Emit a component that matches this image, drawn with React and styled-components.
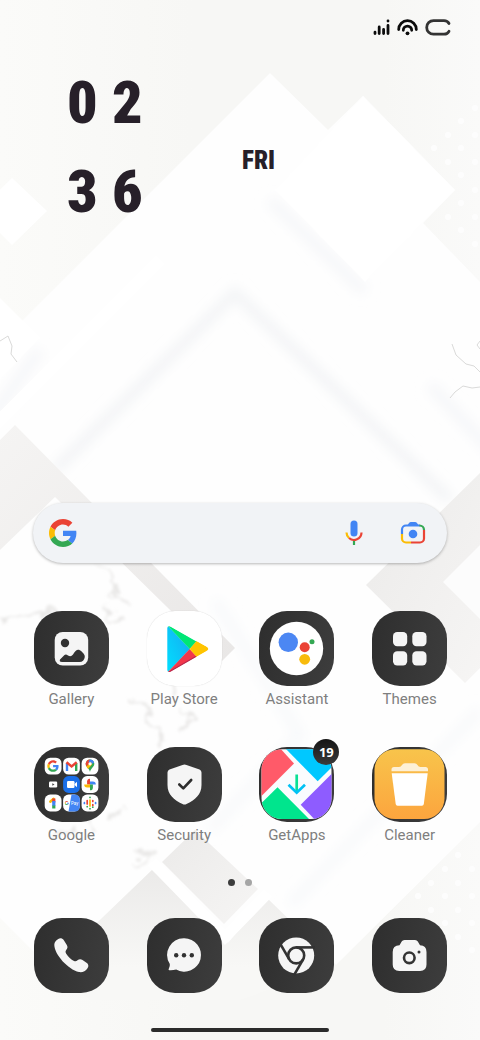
import React from "react"
import styled, { createGlobalStyle, ThemeProvider } from "styled-components"

const theme = {
  colors: {
    page: "#f8f8f6",
    ink: "#272029",
    label: "#7f7f7f",
    tileDark: "#2e2e2e",
    tileLight: "#3d3d3d",
    search: "#f1f3f6",
  },
  fonts: {
    ui: `Roboto, "Liberation Sans", sans-serif`,
    clock: `"Liberation Sans Narrow", "Roboto Condensed", "DejaVu Sans Condensed", sans-serif`,
  },
}

const GlobalStyle = createGlobalStyle`
  * {
    box-sizing: border-box;
  }
  body {
    margin: 0;
    background: ${theme.colors.page};
    font-family: ${theme.fonts.ui};
  }
  button,
  input {
    font: inherit;
    border: 0;
    padding: 0;
    background: none;
  }
  button {
    cursor: pointer;
  }
`

const Screen = styled.main`
  position: relative;
  display: flex;
  flex-direction: column;
  min-height: 100vh;
  overflow: hidden;
  isolation: isolate;
`

const WallpaperSvg = styled.svg`
  position: absolute;
  inset: 0;
  width: 100%;
  height: 100%;
  z-index: -1;
`

const StatusBar = styled.header`
  display: flex;
  justify-content: flex-end;
  align-items: center;
  gap: 7px;
  height: 40px;
  padding: 15px 29px 0 0;
`

const Widget = styled.section`
  display: flex;
  flex: 1;
  align-self: flex-start;
  align-items: flex-start;
  gap: 102px;
  padding: 18px 0 0 67px;
  color: ${({ theme }) => theme.colors.ink};
  font-family: ${({ theme }) => theme.fonts.clock};
  font-weight: 900;
`

const Clock = styled.time`
  display: grid;
  grid-template-columns: 28px 28px;
  column-gap: 17px;
  font-size: 60px;
  line-height: 89px;
  text-align: center;
`

const Day = styled.p`
  margin: 88px 0 0;
  font-size: 25px;
  line-height: 30px;
`

const SearchBar = styled.form`
  display: flex;
  align-items: center;
  height: 60px;
  margin: 0 33px;
  padding: 0 20px 0 16px;
  border-radius: 30px;
  background: ${({ theme }) => theme.colors.search};
  box-shadow: 0 1px 3px rgba(0, 0, 0, 0.28);
`

const SearchInput = styled.input`
  flex: 1;
  min-width: 0;
  height: 100%;
  margin: 0 12px;
  outline: 0;
  font-size: 16px;
`

const SearchButton = styled.button`
  display: flex;
  justify-content: center;
  width: 28px;
  margin-left: ${({ $gap }) => $gap || 0}px;
`

const AppGrid = styled.nav`
  display: grid;
  grid-template-columns: repeat(4, 1fr);
  row-gap: 37px;
  padding: 0 14px 0 15px;
  margin-top: ${({ $top }) => $top}px;
`

const AppButton = styled.button`
  display: flex;
  flex-direction: column;
  align-items: center;
  color: ${({ theme }) => theme.colors.label};
`

const Tile = styled.span`
  position: relative;
  display: block;
  width: 75px;
  height: 75px;
  border-radius: 28px;
  background: ${({ $light, theme }) =>
    $light
      ? "#ffffff"
      : `linear-gradient(100deg, ${theme.colors.tileDark}, ${theme.colors.tileLight})`};
  box-shadow: ${({ $light }) =>
    $light ? "0 0 1px rgba(0, 0, 0, 0.2)" : "none"};
`

const Glyph = styled.svg`
  display: block;
  width: 75px;
  height: 75px;
`

const Label = styled.span`
  margin-top: 2px;
  font-size: 15px;
  line-height: 22px;
`

const Badge = styled.span`
  position: absolute;
  top: -8px;
  right: -5px;
  width: 26px;
  height: 26px;
  border-radius: 50%;
  background: linear-gradient(#151515, #3a3a3a);
  color: #fff;
  font-family: "Noto Sans", sans-serif;
  font-size: 13px;
  font-weight: 700;
  line-height: 26px;
  text-align: center;
`

const Pager = styled.div`
  display: flex;
  justify-content: center;
  gap: 10px;
  margin-top: 33px;
`

const PageDot = styled.span`
  width: 7px;
  height: 7px;
  border-radius: 50%;
  background: ${({ $active }) => ($active ? "#3c3c3c" : "#a5a5a5")};
`

const HomeBar = styled.div`
  width: 37%;
  height: 4px;
  margin: 35px auto 8px;
  border-radius: 2px;
  background: #2b2b2b;
`

const topDots = [
  [475, 108], [461, 121], [448, 135], [475, 135], [434, 148], [461, 148],
  [448, 162], [475, 162], [461, 175], [475, 190], [461, 203], [448, 217],
  [475, 217], [461, 230], [475, 244],
]

const bottomDots = [
  [458, 855], [445, 869], [472, 869], [431, 883], [458, 883], [418, 896],
  [445, 896], [472, 896], [431, 910], [458, 910], [445, 923], [472, 923],
  [458, 937], [472, 950],
]

const Wallpaper = () => (
  <WallpaperSvg
    viewBox="0 0 480 1040"
    preserveAspectRatio="xMidYMid slice"
    aria-hidden="true"
  >
    <defs>
      <linearGradient id="base" x1="0" x2="1" y1="0" y2="0">
        <stop offset="0" stopColor="#fbfbf9" />
        <stop offset=".4" stopColor="#f7f7f5" />
        <stop offset=".8" stopColor="#f7f7f5" />
        <stop offset="1" stopColor="#fafaf9" />
      </linearGradient>
      <linearGradient id="band" x1="0" x2="1" y1="0" y2="1">
        <stop offset="0" stopColor="#f5f4f3" />
        <stop offset="1" stopColor="#e9e7e6" />
      </linearGradient>
      <linearGradient id="fold" x1="0" x2="1" y1="0" y2="1">
        <stop offset="0" stopColor="#ebeae9" />
        <stop offset="1" stopColor="#f6f5f4" />
      </linearGradient>
      <linearGradient id="fade" x1="0" x2="0" y1="0" y2="1">
        <stop offset="0" stopColor="#ebeae9" />
        <stop offset=".75" stopColor="#f8f8f6" />
      </linearGradient>
      <filter id="soft" x="-20%" y="-20%" width="140%" height="140%">
        <feGaussianBlur stdDeviation="6" />
      </filter>
      <filter id="vein" x="-20%" y="-20%" width="140%" height="140%">
        <feTurbulence type="fractalNoise" baseFrequency=".06" numOctaves="4" seed="4" />
        <feDisplacementMap in="SourceGraphic" scale="26" xChannelSelector="R" yChannelSelector="G" />
        <feGaussianBlur stdDeviation="1.6" />
      </filter>
      <clipPath id="cliffs">
        <path d="M270 73 328 130 363 96 455 190 423 223 480 282V822L336 965 285 917 228 943 152 870 50 968 0 918V343Z" />
      </clipPath>
    </defs>

    <rect width="480" height="1040" fill="url(#base)" />
    <path d="M12 178 47 211 12 245-22 211Z" fill="#fff" />
    <path
      d="M270 73 328 130 363 96 455 190 423 223 480 282V822L336 965 285 917 228 943 152 870 50 968 0 918V343Z"
      fill="#fefefe"
    />

    <g clipPath="url(#cliffs)">
      <path
        d="M270 200 365 292 M-10 420 40 350 M430 385 500 460"
        fill="none"
        stroke="#f6f7f9"
        strokeWidth="12"
        filter="url(#soft)"
      />
      <path
        d="M55 470 235 293 450 500"
        fill="none"
        stroke="#f3f4f6"
        strokeWidth="11"
        filter="url(#soft)"
      />
      <path
        d="M215 600 300 735 210 830 M480 710 290 905"
        fill="none"
        stroke="#f8f9fb"
        strokeWidth="11"
        filter="url(#soft)"
      />
      <path d="M160 260-10 430" stroke="#fff" strokeWidth="12" />
    </g>

    <path d="M363 96 455 190 365 282 275 190Z" fill="#fff" />
    <path d="M0 298 40 338 0 380Z" fill="#fff" />
    <path d="M15 425 235 648 222 661 55 497 0 550V440Z" fill="url(#band)" />
    <path d="M480 473 366 585 465 683 480 668Z" fill="url(#fold)" />
    <path d="M480 545 443 582 480 619Z" fill="#fcfcfc" />

    <path d="M195 830 162 862 224 924 258 889Z" fill="url(#fold)" />
    <path
      d="M152 870 228 943 266 897 336 965 240 1000H90L50 968Z"
      fill="url(#fade)"
    />
    <path d="M152 862 225 937 268 893" fill="none" stroke="#fff" strokeWidth="11" />

    {/* marble veins */}
    <g fill="none" stroke="#e8e7e6" strokeWidth="3" filter="url(#vein)">
      <path d="M0 620 20 616 45 610 62 618 M98 565 112 578 116 592 128 604 M104 605 116 622" />
      <path d="M130 700 145 712 156 730 165 744 M180 708 192 718 182 728 M168 655 178 698" />
      <path d="M55 838 78 828 M112 820 120 806 M135 850 148 852 134 866 M70 790 95 835" />
    </g>
    <g fill="none" stroke="#dadad9" strokeWidth="1">
      <path d="M0 341 8 336 12 346 11 354 17 362 M452 344 456 355 466 364 474 366 480 372 M450 398 455 392 463 386 472 388 480 387" />
      <path d="M480 341 477 345 480 349" />
    </g>

    {topDots.map(([x, y]) => (
      <circle key={`${x}-${y}`} cx={x} cy={y} r="3" fill="#fdfdfd" />
    ))}
    {bottomDots.map(([x, y]) => (
      <circle key={`${x}-${y}`} cx={x} cy={y} r="3" fill="#fdfdfd" />
    ))}
  </WallpaperSvg>
)

const SignalIcon = () => (
  <svg width="17" height="17" viewBox="0 0 17 17" role="img" aria-label="Signal">
    <g stroke="#0c0c0c" strokeWidth="2.8" strokeLinecap="round">
      <path d="M2 13.2v1.4M6.200 8v6.600M10.600 10.500v4.100M15 6.500v8.100M15 2v.1" />
    </g>
  </svg>
)

const WifiIcon = () => (
  <svg width="21" height="17" viewBox="0 0 21 17" role="img" aria-label="Wi-Fi">
    <g fill="none" stroke="#0c0c0c" strokeWidth="2.800" strokeLinecap="round">
      <path d="M1.700 10.600a8.800 8.900 0 0 1 17.600 0" />
      <path d="M6.300 11.300a4.200 4.200 0 0 1 8.400 0" />
    </g>
    <circle cx="10.500" cy="14.300" r="1.900" fill="#0c0c0c" />
  </svg>
)

const BatteryIcon = () => (
  <svg width="26" height="17" viewBox="0 0 26 17" role="img" aria-label="Battery">
    <path
      d="M24 4.500Q22.500 1.600 19 1.600H8.500a6.800 6.800 0 0 0 0 13.600H19q3.500 0 5-2.900"
      fill="none"
      stroke="#333"
      strokeWidth="2.800"
      strokeLinecap="round"
    />
  </svg>
)

// 48x48 logo, shared by the search bar and the folder
const GoogleMark = () => (
  <>
    <path fill="#EA4335" d="M24 9.500c3.540 0 6.710 1.220 9.210 3.600l6.850-6.850C35.900 2.380 30.470 0 24 0 14.620 0 6.510 5.380 2.560 13.220l7.980 6.190C12.430 13.720 17.740 9.500 24 9.500z" />
    <path fill="#4285F4" d="M46.980 24.550c0-1.570-.15-3.090-.38-4.550H24v9.020h12.940c-.58 2.960-2.260 5.480-4.780 7.180l7.730 6c4.510-4.180 7.090-10.360 7.090-17.650z" />
    <path fill="#FBBC05" d="M10.530 28.590c-.48-1.450-.76-2.990-.76-4.590s.27-3.140.76-4.590l-7.980-6.190C.92 16.460 0 20.120 0 24c0 3.880.92 7.540 2.560 10.780l7.970-6.190z" />
    <path fill="#34A853" d="M24 48c6.480 0 11.930-2.130 15.890-5.810l-7.730-6c-2.150 1.450-4.920 2.300-8.160 2.300-6.260 0-11.570-4.220-13.470-9.910l-7.980 6.190C6.510 42.620 14.620 48 24 48z" />
  </>
)

const MicIcon = () => (
  <svg width="18" height="26" viewBox="0 0 18 26" aria-hidden="true">
    <rect x="5.500" y="0.500" width="7" height="16" rx="3.500" fill="#4285F4" />
    <path d="M9 20v5" stroke="#34A853" strokeWidth="2.200" />
    <path d="M1.500 12.500A7.500 7.500 0 0 0 4 18" fill="none" stroke="#FBBC05" strokeWidth="2.200" />
    <path d="M4 18a7.500 7.500 0 0 0 12.500-5.500" fill="none" stroke="#EA4335" strokeWidth="2.200" />
  </svg>
)

const LensIcon = () => (
  <svg width="26" height="24" viewBox="0 0 26 24" aria-hidden="true">
    <g fill="none" strokeWidth="2.200">
      <path d="M2 13V8.500a4 4 0 0 1 4-4h14" stroke="#4285F4" />
      <path d="M19.500 4.500a4.500 4.500 0 0 1 4.500 4.500" stroke="#34A853" />
      <path d="M24 9v8.500a4 4 0 0 1-4 4h-9" stroke="#EA4335" />
      <path d="M2 13v4.500a4 4 0 0 0 4 4h5" stroke="#FBBC05" />
    </g>
    <path d="M7 5 9 2q.7-1 2-1h4q1.300 0 2 1l2 3z" fill="#4285F4" />
    <circle cx="13" cy="13" r="4.300" fill="#4285F4" />
  </svg>
)

const GalleryGlyph = () => (
  <>
    <rect x="20.700" y="21" width="33.500" height="33.500" rx="8" fill="#f5f5f5" />
    <circle cx="31" cy="32" r="4.200" fill="#323232" />
    <path
      d="M26 48.500 30.500 44Q32 43 34 44.500 37 46.500 39 43.500 42 38 45 38.800 47 39.500 49.500 42.500 51 44 50.800 46 50 51 45.500 51H28Q25 51 26 48.500Z"
      fill="#323232"
    />
  </>
)

const PlayGlyph = () => (
  <>
    <defs>
      <linearGradient id="playBlue" x1="0" x2="1" y1="1" y2="0">
        <stop offset="0" stopColor="#00e0ff" />
        <stop offset="1" stopColor="#18a8f0" />
      </linearGradient>
      <clipPath id="playShape">
        <path d="M20.300 17Q20.500 14.300 23.500 15.500L59.500 35.500Q63 38 59.500 40L23.500 60.700Q20.500 62 20.300 59Z" />
      </clipPath>
    </defs>
    <g clipPath="url(#playShape)">
      <path d="M20 14V62L43 38Z" fill="url(#playBlue)" />
      <path d="M19 13 49.500 30.500 42.700 38Z" fill="#00e676" />
      <path d="M19 63 42.700 38 49.700 45.500Z" fill="#f2374b" />
      <path d="M20 61.500 49.500 44.500V47L22 63Z" fill="#b92a4d" />
      <path d="M49.500 30 42.700 38 49.700 46 64 38Z" fill="#ffc400" />
    </g>
  </>
)

const AssistantGlyph = () => (
  <>
    <circle cx="37.500" cy="37.500" r="26.700" fill="#fff" />
    <circle cx="29.300" cy="31.300" r="9.700" fill="#4c87f3" />
    <circle cx="45.700" cy="36.300" r="5" fill="#ea4335" />
    <circle cx="53" cy="30.700" r="2.500" fill="#34a853" />
    <circle cx="45.700" cy="48.300" r="5.400" fill="#f8bb0c" />
  </>
)

const ThemesGlyph = () => (
  <g fill="#f5f5f5">
    <rect x="21" y="21" width="14.200" height="14.200" rx="4.200" />
    <rect x="40.300" y="21" width="14.200" height="14.200" rx="4.200" />
    <rect x="21" y="40.300" width="14.200" height="14.200" rx="4.200" />
    <rect x="40.300" y="40.300" width="14.200" height="14.200" rx="4.200" />
  </g>
)

const FolderGlyph = () => (
  <>
    {[10.7, 29.1, 47.6].map(y =>
      [10.7, 29.1, 47.6].map(x =>
        x === 10.7 && y === 29.1 ? null : (
          <rect
            key={`${x}-${y}`}
            x={x}
            y={y}
            width="16.800"
            height="16.800"
            rx="5.500"
            fill={x === 29.1 && y === 29.1 ? "#1a6fe8" : "#fff"}
          />
        )
      )
    )}
    {/* search */}
    <g transform="translate(13.300 13.300) scale(.24)">
      <GoogleMark />
    </g>
    {/* mail */}
    <g fill="none" strokeWidth="2.400">
      <path d="M33 24v-8" stroke="#4285f4" />
      <path d="M42.200 24v-8" stroke="#34a853" />
      <path d="M32.500 15.200 37.600 19.400 42.700 15.200" stroke="#ea4335" />
    </g>
    {/* maps */}
    <g transform="translate(56 18.500)">
      <path d="M0 6.500C-.5 3-4.300 1.500-4.300-1.700A4.300 4.300 0 0 1 4.300-1.700C4.300 1.500.5 3 0 6.500Z" fill="#34a853" />
      <path d="M-3.600 1-1 -1.700 0-6A4.300 4.300 0 0 0-4.300-1.700Q-4.300-.3-3.600 1Z" fill="#ea4335" />
      <path d="M0-6A4.300 4.300 0 0 1 4.100-3L1-1-1.500-4Z" fill="#4285f4" />
      <path d="M-3.600 1 1-3.500 2-1-2 3.500Z" fill="#fbbc05" />
      <circle cy="-1.700" r="1.600" fill="#fff" />
    </g>
    {/* tv */}
    <rect x="15" y="34.500" width="8.200" height="6" rx="1.200" fill="#fff" />
    <path d="M18.300 36.200v2.600l2.200-1.300z" fill="#444" />
    {/* meet */}
    <rect x="33" y="34" width="7.500" height="7" rx="1.200" fill="#fff" />
    <path d="M40.500 37 43 34.700v5.600L40.500 38z" fill="#fff" />
    {/* photos */}
    <g transform="translate(56 37.500)">
      <path d="M0 0V-5.800A3 3 0 0 0 0 0Z" fill="#ea4335" />
      <path d="M0 0V-5.800A2.900 2.900 0 0 0-2.900-2.900V0Z" fill="#ea4335" />
      <path d="M0 0H5.800A2.900 2.900 0 0 0 2.900-2.900H0Z" fill="#4285f4" />
      <path d="M0 0V5.800A2.900 2.900 0 0 0 2.900 2.900V0Z" fill="#34a853" />
      <path d="M0 0H-5.800A2.900 2.900 0 0 0-2.900 2.900H0Z" fill="#fbbc05" />
    </g>
    {/* one */}
    <path d="M16.500 54.500 19.500 52" stroke="#fbbc05" strokeWidth="2.800" strokeLinecap="round" />
    <path d="M19.800 51.500v4" stroke="#ea4335" strokeWidth="3.200" />
    <path d="M19.800 54v5" stroke="#4285f4" strokeWidth="3.200" />
    <path d="M19.800 58.500v3" stroke="#34a853" strokeWidth="3.200" />
    {/* pay */}
    <path d="M37.500 47.600H40.400Q45.900 47.600 45.900 53.100V58.900Q45.900 64.400 40.400 64.400H34.500Z" fill="#4285f4" />
    <g transform="translate(30.800 54) scale(.085)">
      <GoogleMark />
    </g>
    <text x="37" y="58" fontSize="4.500" fill="#fff" fontFamily="Roboto, sans-serif">
      Pay
    </text>
    {/* podcasts */}
    <g strokeWidth="1.700" strokeLinecap="round">
      <path d="M50.400 55.700v.8M61.600 55.700v.8" stroke="#4285f4" />
      <path d="M53.200 53.500v3.500M58.800 53.500v1M58.800 57.500v1" stroke="#ea4335" />
      <path d="M56 53v6" stroke="#fbbc05" />
      <path d="M56 50.300v.2M56 61.600v.2M53.200 59.500v.2M58.800 60v.2" stroke="#34a853" />
    </g>
  </>
)

const SecurityGlyph = () => (
  <>
    <path
      d="M35.500 18Q37.500 17 39.500 18L52.500 22.500Q54.500 23.300 54.500 25.500V38C54.500 47.500 48 53 39.500 57Q37.500 58 35.500 57C27 53 20.500 47.500 20.500 38V25.500Q20.500 23.300 22.500 22.500Z"
      fill="#f5f5f5"
    />
    <path
      d="M32.300 37.500 36.300 41.400 44.200 33"
      fill="none"
      stroke="#2e2e2e"
      strokeWidth="2.600"
      strokeLinecap="round"
      strokeLinejoin="round"
    />
  </>
)

const GetAppsGlyph = () => (
  <>
    <defs>
      <clipPath id="storeShape">
        <rect x="2.500" y="2.300" width="70" height="69.700" rx="20.500" />
      </clipPath>
    </defs>
    <g clipPath="url(#storeShape)">
      <rect width="75" height="75" fill="#fafcfe" />
      <path d="M0 0H20L35 16.500 0 51.500Z" fill="#ff5a69" />
      <path d="M25 0 58.700 34.300 75 18V0Z" fill="#00c8ff" />
      <path d="M75 24.500 41.700 57.700 58 75H75Z" fill="#8e5cff" />
      <path d="M0 58.500 18.500 40.300 53 75H0Z" fill="#00e58d" />
    </g>
    <path d="M37.700 27.500V45" stroke="#0be095" strokeWidth="2.700" />
    <path d="M29.500 37.700 37.700 45.700 46 37.700" fill="none" stroke="#00c2f5" strokeWidth="2.700" />
  </>
)

const CleanerGlyph = () => (
  <>
    <defs>
      <linearGradient id="cleaner" x1="0" x2="0" y1="0" y2="1">
        <stop offset="0" stopColor="#f8c44b" />
        <stop offset="1" stopColor="#fca53e" />
      </linearGradient>
    </defs>
    <rect x="2.500" y="2.300" width="70" height="69.700" rx="20.500" fill="url(#cleaner)" />
    <path
      d="M19.500 24.300V22.500Q19.500 20 22 20H27Q29 20 30 18 31 16.300 33 16.300H42.500Q44.500 16.300 45.500 18 46.500 20 48.500 20H53.500Q56 20 56 22.500V24.300Z"
      fill="#fdf0d6"
    />
    <path d="M19.700 26.200H55.700L51.800 57Q51.500 58.800 50 58.800H25.500Q24 58.800 23.700 57Z" fill="#fff" />
  </>
)

const PhoneGlyph = () => (
  <path
    d="M20.300 27C20.300 23.500 23.500 20.800 26.500 20.300 28 20 29 21 30 22.500L32.800 27C34 29 33.500 30.500 32.200 32 31.200 33.200 31.500 34.500 32.200 35.700 34.300 39 37 41.300 40 43 41.500 43.700 42.500 43.300 43.500 42.300 45 41 47 41 48.500 42L52.500 44.700C54.500 46 55 48 53.500 50.300 51.500 53.500 48 54.600 45 54 34 51.500 20.500 36.500 20.300 27Z"
    fill="#f5f5f5"
  />
)

const MessageGlyph = () => (
  <>
    <path
      d="M37.200 20.300a16.700 16.700 0 1 1-8 31.300Q25.500 52.600 22.300 52.300 21 52 21.800 50.800 23.200 48.500 22.800 46A16.700 16.700 0 0 1 37.200 20.300Z"
      fill="#f5f5f5"
    />
    <g fill="#323232">
      <circle cx="29.200" cy="37.300" r="2.200" />
      <circle cx="37" cy="37.300" r="2.200" />
      <circle cx="44.800" cy="37.300" r="2.200" />
    </g>
  </>
)

const ChromeGlyph = () => (
  <>
    <circle cx="37.200" cy="37.400" r="18" fill="#f5f5f5" />
    <g fill="none" stroke="#333" strokeWidth="2.600">
      <circle cx="37.200" cy="37.400" r="8" />
      {[0, 120, 240].map(angle => (
        <path
          key={angle}
          d="M37.200 29.400H56"
          transform={`rotate(${angle} 37.200 37.400)`}
        />
      ))}
    </g>
  </>
)

const CameraGlyph = () => (
  <>
    <path
      d="M27.500 27.300 29.700 23.500Q30.500 22 32.500 22H43Q45 22 45.800 23.500L48 27.300Q54.500 27.500 54.500 34V46.500Q54.500 53 48 53H27.300Q20.700 53 20.700 46.500V34Q20.700 27.500 27.500 27.300Z"
      fill="#f5f5f5"
    />
    <circle cx="37.300" cy="39.800" r="5.300" fill="none" stroke="#333" strokeWidth="2.600" />
    <circle cx="47" cy="34" r="1.500" fill="#333" />
  </>
)

const apps = [
  { name: "Gallery", glyph: GalleryGlyph },
  { name: "Play Store", glyph: PlayGlyph, light: true },
  { name: "Assistant", glyph: AssistantGlyph },
  { name: "Themes", glyph: ThemesGlyph },
  { name: "Google", glyph: FolderGlyph },
  { name: "Security", glyph: SecurityGlyph },
  { name: "GetApps", glyph: GetAppsGlyph, badge: 19 },
  { name: "Cleaner", glyph: CleanerGlyph },
]

const dock = [
  { name: "Phone", glyph: PhoneGlyph },
  { name: "Messages", glyph: MessageGlyph },
  { name: "Chrome", glyph: ChromeGlyph },
  { name: "Camera", glyph: CameraGlyph },
]

const AppIcon = ({ app, showLabel }) => {
  const Drawing = app.glyph

  return (
    <AppButton type="button" aria-label={showLabel ? undefined : app.name}>
      <Tile $light={app.light}>
        <Glyph viewBox="0 0 75 75" aria-hidden="true">
          <Drawing />
        </Glyph>
        {app.badge && <Badge>{app.badge}</Badge>}
      </Tile>
      {showLabel && <Label>{app.name}</Label>}
    </AppButton>
  )
}

const App = () => (
  <ThemeProvider theme={theme}>
    <GlobalStyle />
    <Screen>
      <Wallpaper />
      <StatusBar>
        <SignalIcon />
        <WifiIcon />
        <BatteryIcon />
      </StatusBar>
      <Widget>
        <Clock dateTime="02:36">
          <span>0</span>
          <span>2</span>
          <span>3</span>
          <span>6</span>
        </Clock>
        <Day>FRI</Day>
      </Widget>
      <SearchBar role="search" onSubmit={e => e.preventDefault()}>
        <svg width="28" height="28" viewBox="0 0 48 48" aria-hidden="true">
          <GoogleMark />
        </svg>
        <SearchInput type="text" aria-label="Search" />
        <SearchButton type="button" aria-label="Voice search">
          <MicIcon />
        </SearchButton>
        <SearchButton type="button" aria-label="Lens" $gap={31}>
          <LensIcon />
        </SearchButton>
      </SearchBar>
      <AppGrid $top={48} aria-label="Apps">
        {apps.map(app => (
          <AppIcon key={app.name} app={app} showLabel />
        ))}
      </AppGrid>
      <Pager>
        <PageDot $active />
        <PageDot />
      </Pager>
      <AppGrid $top={32} aria-label="Dock">
        {dock.map(app => (
          <AppIcon key={app.name} app={app} />
        ))}
      </AppGrid>
      <HomeBar />
    </Screen>
  </ThemeProvider>
)

export default App
